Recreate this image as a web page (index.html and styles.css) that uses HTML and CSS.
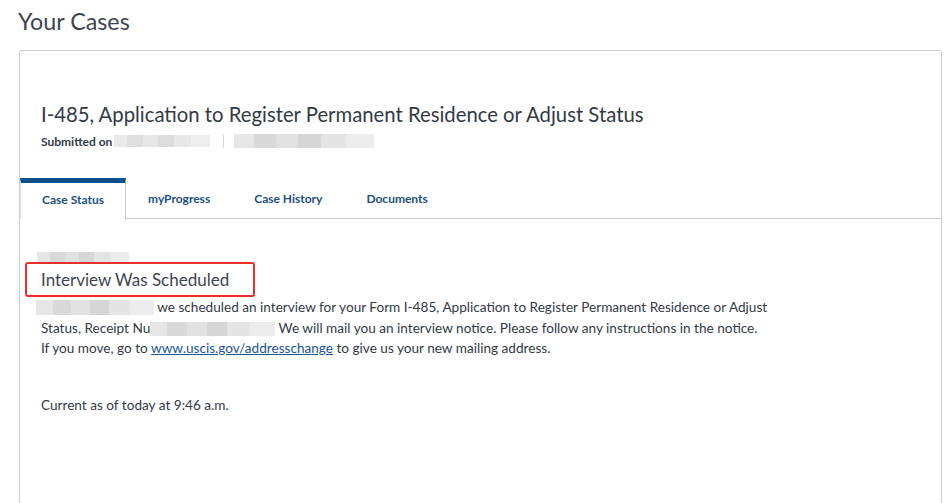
FILE: index.html
```html
<!DOCTYPE html>
<html>
<head>
<meta charset="utf-8">
<link rel="stylesheet" href="styles.css">
</head>
<body>
<main class="page">
  <h1 class="page-title">Your Cases</h1>
  <section class="card">
    <div class="case-head">
      <h2 class="case-title">I-485, Application to Register Permanent Residence or Adjust Status</h2>
      <div class="submitted">
        <span class="sub-label">Submitted on</span>
        <span class="blur blur-a"></span>
        <span class="divider"></span>
        <span class="blur blur-b"></span>
      </div>
    </div>
    <nav class="tabs">
      <a class="tab active">Case Status</a>
      <a class="tab">myProgress</a>
      <a class="tab">Case History</a>
      <a class="tab">Documents</a>
      <span class="tab-fill"></span>
    </nav>
    <div class="status">
      <span class="blur blur-date"></span>
      <div class="status-box"><h3 class="status-title">Interview Was Scheduled</h3></div>
      <p class="status-text"><span class="blur blur-inline1"></span> we scheduled an interview for your Form I-485, Application to Register Permanent Residence or Adjust<br>Status, Receipt Nu<span class="blur blur-inline2"></span> We will mail you an interview notice. Please follow any instructions in the notice.<br>If you move, go to <a class="link">www.uscis.gov/addresschange</a> to give us your new mailing address.</p>
      <p class="current">Current as of today at 9:46 a.m.</p>
    </div>
  </section>
</main>
</body>
</html>
```
FILE: styles.css
```css
* { box-sizing: border-box; }
html, body { margin: 0; padding: 0; background: #fff; }
body { font-family: "Lato", "Liberation Sans", sans-serif; color: #323a45; }
.page { padding: 7px 7px 0 18px; }
.page-title { margin: 0; font-weight: 400; font-size: 23.3px; line-height: 28px; color: #3d4551; }
.card {
  margin-top: 15px; margin-left: 1px;
  border: 1px solid #d0d0d0; border-radius: 3px;
  box-shadow: 0 1px 2px rgba(0,0,0,0.08);
  height: 470px;
}
.case-head { padding: 50px 21px 0 21px; }
.case-title { margin: 0; font-weight: 400; font-size: 20.3px; line-height: 26px; color: #323a45; }
.submitted { display: flex; align-items: center; margin-top: 6px; height: 16px; }
.sub-label { font-size: 12px; font-weight: 700; color: #323a45; margin-right: 2px; }
.blur { display: inline-block; vertical-align: middle;
  background: linear-gradient(90deg, #e6e6e6 0 14%, #d9d9d9 14% 30%, #e2e2e2 30% 46%, #d6d6d6 46% 62%, #e4e4e4 62% 80%, #ececec 80% 100%); }
.blur-a { width: 96px; height: 12px; opacity: .85; }
.divider { width: 1px; height: 14px; background: #d6d6d6; margin: 0 10px 0 13px; }
.blur-b { width: 140px; height: 14px; }
.tabs { display: flex; margin-top: 29px; height: 41px; }
.tab { display: flex; align-items: center; justify-content: center; padding: 1px 22px 0; font-size: 12px; font-weight: 700; color: #205081; border-bottom: 1px solid #c9c9c9; white-space: nowrap; }
.tab.active { width: 106px; padding: 0 0 3px; border-top: 5px solid #0b4f8a; border-left: 1px solid #e0e0e0; border-right: 1px solid #c9c9c9; border-bottom: 0; }
.tab-fill { flex: 1; border-bottom: 1px solid #c9c9c9; }
.status { padding: 33px 21px 0 21px; position: relative; }
.blur-date { display: block; width: 92px; height: 10px; margin-left: -4px; }
.status-box { margin-left: -16px; width: 230px; height: 35px; border: 2px solid #e8302c; border-radius: 3px; display: flex; align-items: center; padding-left: 14px; }
.status-title { margin: 0; font-size: 17px; font-weight: 400; color: #3d4551; }
.status-text { margin: 0; font-size: 13.6px; line-height: 20.5px; color: #323a45; }
.blur-inline1 { width: 118px; height: 15px; margin-left: -5px; vertical-align: -3px; }
.blur-inline2 { width: 125px; height: 14px; vertical-align: -3px; }
.link { color: #205493; text-decoration: underline; }
.current { margin: 36px 0 0 0; font-size: 13.6px; line-height: 20px; color: #323a45; }
```
